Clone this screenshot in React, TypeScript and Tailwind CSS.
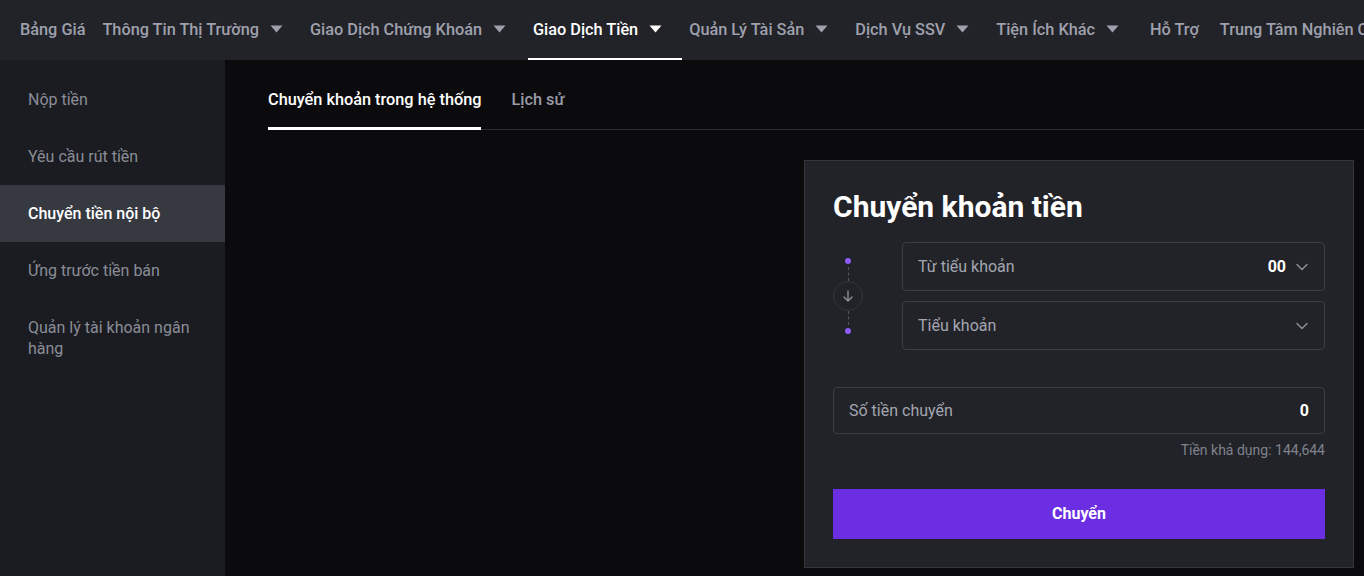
import React from "react";

const Caret = () => (
  <svg width="13" height="8" viewBox="0 0 13 8" className="shrink-0">
    <path d="M0.5 0.5 L12.5 0.5 L6.5 7.5 Z" fill="currentColor" />
  </svg>
);

const Chevron = () => (
  <svg width="14" height="14" viewBox="0 0 14 14" fill="none" stroke="currentColor" strokeWidth="1.5" strokeLinecap="round" strokeLinejoin="round">
    <path d="M2 4.5 L7 9.5 L12 4.5" />
  </svg>
);

type NavItem = { label: string; caret?: boolean; active?: boolean; extra?: string };

const navItems: NavItem[] = [
  { label: "Bảng Giá", extra: "pl-[5px] pr-[10px]" },
  { label: "Thông Tin Thị Trường", caret: true },
  { label: "Giao Dịch Chứng Khoán", caret: true },
  { label: "Giao Dịch Tiền", caret: true, active: true },
  { label: "Quản Lý Tài Sản", caret: true },
  { label: "Dịch Vụ SSV", caret: true },
  { label: "Tiện Ích Khác", caret: true },
  { label: "Hỗ Trợ", extra: "pl-[9px] pr-[14px]" },
  { label: "Trung Tâm Nghiên Cứu", extra: "pl-[5px] pr-[10px]" },
];

const sideItems = [
  { label: "Nộp tiền" },
  { label: "Yêu cầu rút tiền" },
  { label: "Chuyển tiền nội bộ", active: true },
  { label: "Ứng trước tiền bán" },
  { label: "Quản lý tài khoản ngân hàng" },
];

export default function App() {
  return (
    <div
      className="w-[1364px] h-[576px] overflow-hidden flex flex-col bg-[#0b0b0d]"
      style={{ fontFamily: "Roboto, 'Noto Sans', sans-serif" }}
    >
      {/* Header */}
      <div className="h-[60px] shrink-0 bg-[#222329] flex items-stretch pl-[15px] gap-[2px] whitespace-nowrap overflow-hidden">
        {navItems.map((it) => (
          <div
            key={it.label}
            className={
              "flex items-center gap-[11px] text-[16.3px] font-medium border-b-2 " +
              (it.extra ? it.extra + " " : "pl-[5px] pr-[20px] ") +
              (it.active ? "text-white border-white" : "text-[#9ea0ac] border-transparent")
            }
          >
            <span className="pt-[2px]">{it.label}</span>
            {it.caret && <Caret />}
          </div>
        ))}
      </div>

      <div className="flex flex-1 min-h-0">
        {/* Sidebar */}
        <div className="w-[225px] shrink-0 bg-[#1b1c21] pt-[11px] flex flex-col">
          {sideItems.map((it) => (
            <div
              key={it.label}
              className={
                "py-[18px] pl-[28px] pr-[20px] text-[16px] leading-[21px] " +
                (it.active ? "bg-[#363940] text-white font-medium" : "text-[#8a8d97]")
              }
            >
              {it.label}
            </div>
          ))}
        </div>

        {/* Main */}
        <div className="flex-1 pl-[43px] pr-0 flex flex-col">
          <div className="flex items-end h-[70px] border-b border-[#2e2f34] gap-[30px]">
            <div className="text-[16.3px] font-medium text-white pb-[15px] border-b-[3px] border-white -mb-px">
              Chuyển khoản trong hệ thống
            </div>
            <div className="text-[16.3px] font-medium text-[#9a9ca8] pb-[17px]">Lịch sử</div>
          </div>

          <div className="flex justify-end pr-[10px] pt-[30px]">
            <div className="w-[550px] h-[408px] bg-[#222329] border border-[#36373d] px-[28px] pt-[26px]">
              <div className="text-[30px] font-bold text-white leading-[40px]">Chuyển khoản tiền</div>

              <div className="flex mt-[15px]">
                <div className="w-[69px] shrink-0 flex flex-col items-start">
                  <div className="w-[30px] flex flex-col items-center pt-[16px]">
                    <div className="w-[6px] h-[6px] rounded-full bg-[#8b5cf6]" />
                    <div className="h-[14px] mt-[3px] border-l border-dashed border-[#55575e]" />
                    <div className="w-[30px] h-[30px] rounded-full border border-[#34353b] flex items-center justify-center text-[#8a8d97]">
                      <svg width="14" height="14" viewBox="0 0 14 14" fill="none" stroke="currentColor" strokeWidth="1.4" strokeLinecap="round" strokeLinejoin="round">
                        <path d="M7 2 V12 M3 8 L7 12 L11 8" />
                      </svg>
                    </div>
                    <div className="h-[14px] mb-[3px] border-l border-dashed border-[#55575e]" />
                    <div className="w-[6px] h-[6px] rounded-full bg-[#8b5cf6]" />
                  </div>
                </div>
                <div className="flex-1 flex flex-col gap-[10px]">
                  <div className="h-[49px] rounded-[4px] border border-[#3c3d43] flex items-center px-[15px] text-[16px]">
                    <span className="text-[#a3a6b0] flex-1">Từ tiểu khoản</span>
                    <span className="text-white font-bold mr-[9px]">00</span>
                    <span className="text-[#8a8d97]"><Chevron /></span>
                  </div>
                  <div className="h-[49px] rounded-[4px] border border-[#3c3d43] flex items-center px-[15px] text-[16px]">
                    <span className="text-[#a3a6b0] flex-1">Tiểu khoản</span>
                    <span className="text-[#8a8d97]"><Chevron /></span>
                  </div>
                </div>
              </div>

              <div className="mt-[37px] h-[47px] rounded-[4px] border border-[#3c3d43] flex items-center px-[15px] text-[16px]">
                <span className="text-[#a3a6b0] flex-1">Số tiền chuyển</span>
                <span className="text-white font-bold">0</span>
              </div>
              <div className="text-right text-[14px] text-[#7f828c] mt-[7px] leading-[18px]">Tiền khả dụng: 144,644</div>

              <button className="mt-[30px] w-full h-[50px] bg-[#6b2ee3] text-white font-bold text-[16px]">
                Chuyển
              </button>
            </div>
          </div>
        </div>
      </div>
    </div>
  );
}
